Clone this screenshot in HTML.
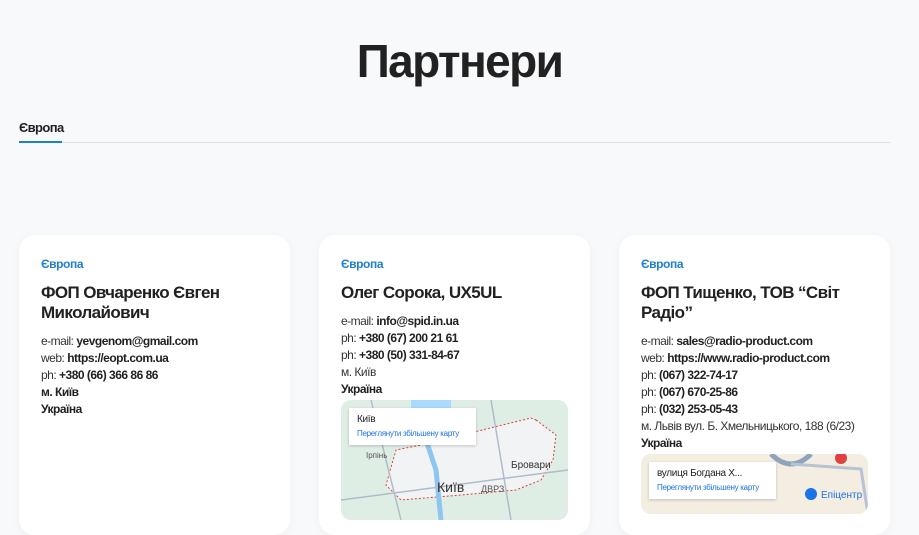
<!DOCTYPE html>
<html><head><meta charset="utf-8"><style>
*{margin:0;padding:0;box-sizing:border-box}
body{width:919px;height:500px;overflow:hidden;background:#f8f9fa;font-family:"Liberation Sans",Arial,sans-serif;color:#212121;position:relative}
h1{position:absolute;top:33px;left:0;width:919px;text-align:center;font-size:46px;font-weight:bold;letter-spacing:-1.6px;line-height:56px;color:#212121}
.tab{position:absolute;left:19px;top:120px;font-size:13px;font-weight:bold;letter-spacing:-0.6px}
.line{position:absolute;left:19px;top:142px;width:871px;height:1px;background:#e0e0e0}
.ul{position:absolute;left:19px;top:141px;width:43px;height:2px;background:#1e7fd1}
.card{position:absolute;top:235px;width:271px;height:300px;background:#fff;border-radius:16px;box-shadow:0 2px 10px rgba(0,0,0,0.04);padding:22px 22px}
.reg{font-size:12px;font-weight:bold;color:#1e7fd1;line-height:14px;letter-spacing:-0.4px}
.name{font-size:17px;font-weight:bold;line-height:20px;margin-top:12px;margin-bottom:10px;letter-spacing:-0.6px}
.d{font-size:12px;line-height:17px;color:#333;letter-spacing:-0.5px;white-space:nowrap}
.d b{color:#212121}
.map{margin-top:2px;width:227px;height:120px;border-radius:10px;position:relative;overflow:hidden}
.pop{position:absolute;left:8px;top:8px;width:127px;background:#fff;padding:6px 8px;font-size:10px;line-height:11px;box-shadow:0 1px 3px rgba(0,0,0,.2);letter-spacing:-0.3px}
.pop a{color:#1a73e8;font-size:8px;display:block;margin-top:4px;line-height:10px}
</style></head><body>
<h1>Партнери</h1>
<div class="tab">Європа</div>
<div class="line"></div><div class="ul"></div>

<div class="card" style="left:19px">
<div class="reg">Європа</div>
<div class="name">ФОП Овчаренко Євген Миколайович</div>
<div class="d">e-mail: <b>yevgenom@gmail.com</b><br>web: <b>https://eopt.com.ua</b><br>ph: <b>+380 (66) 366 86 86</b><br><b>м. Київ</b><br><b>Україна</b></div>
</div>

<div class="card" style="left:319px">
<div class="reg">Європа</div>
<div class="name">Олег Сорока, UX5UL</div>
<div class="d">e-mail: <b>info@spid.in.ua</b><br>ph: <b>+380 (67) 200 21 61</b><br>ph: <b>+380 (50) 331-84-67</b><br>м. Київ<br><b>Україна</b></div>
<div class="map" style="background:#dfeee5">
<svg width="227" height="120" style="position:absolute;left:0;top:0">
<rect x="70" y="0" width="40" height="20" fill="#aadaff"/>
<path d="M195 20 L215 35 L212 60 L200 80 L175 90 L120 95 L60 100 L45 85 L55 50 L80 45 L190 18Z" fill="#f1f3f4" stroke="#e04040" stroke-dasharray="2 2"/>
<path d="M85 40 L95 70 L100 120" stroke="#8ec6f0" stroke-width="5" fill="none"/>
<path d="M0 100 L227 70 M30 0 L60 120 M150 0 L170 120" stroke="#b0bccb" stroke-width="1.5" fill="none"/>
<text x="96" y="92" font-size="14" font-family="Liberation Sans" fill="#333">Київ</text>
<text x="170" y="68" font-size="10" font-family="Liberation Sans" fill="#333">Бровари</text>
<text x="140" y="92" font-size="9" font-family="Liberation Sans" fill="#555">ДВРЗ</text>
<text x="25" y="58" font-size="8" font-family="Liberation Sans" fill="#555">Ірпінь</text>
</svg>
<div class="pop">Київ<a>Переглянути збільшену карту</a></div>
</div>
</div>

<div class="card" style="left:619px">
<div class="reg">Європа</div>
<div class="name">ФОП Тищенко, ТОВ “Світ Радіо”</div>
<div class="d">e-mail: <b>sales@radio-product.com</b><br>web: <b>https://www.radio-product.com</b><br>ph: <b>(067) 322-74-17</b><br>ph: <b>(067) 670-25-86</b><br>ph: <b>(032) 253-05-43</b><br>м. Львів вул. Б. Хмельницького, 188 (6/23)<br><b>Україна</b></div>
<div class="map" style="background:#f3ede2;height:60px">
<svg width="227" height="60" style="position:absolute;left:0;top:0">
<path d="M130 0 Q150 20 170 0" stroke="#8fa3bd" stroke-width="5" fill="none"/>
<path d="M150 10 L220 15 L227 60" stroke="#b7c3d3" stroke-width="3" fill="none"/>
<circle cx="200" cy="4" r="6" fill="#e04040"/>
<circle cx="170" cy="40" r="6" fill="#1a73e8"/>
<text x="180" y="44" font-size="10" font-family="Liberation Sans" fill="#1a73e8">Епіцентр</text>
</svg>
<div class="pop">вулиця Богдана Х...<a>Переглянути збільшену карту</a></div>
</div>
</div>
</body></html>
